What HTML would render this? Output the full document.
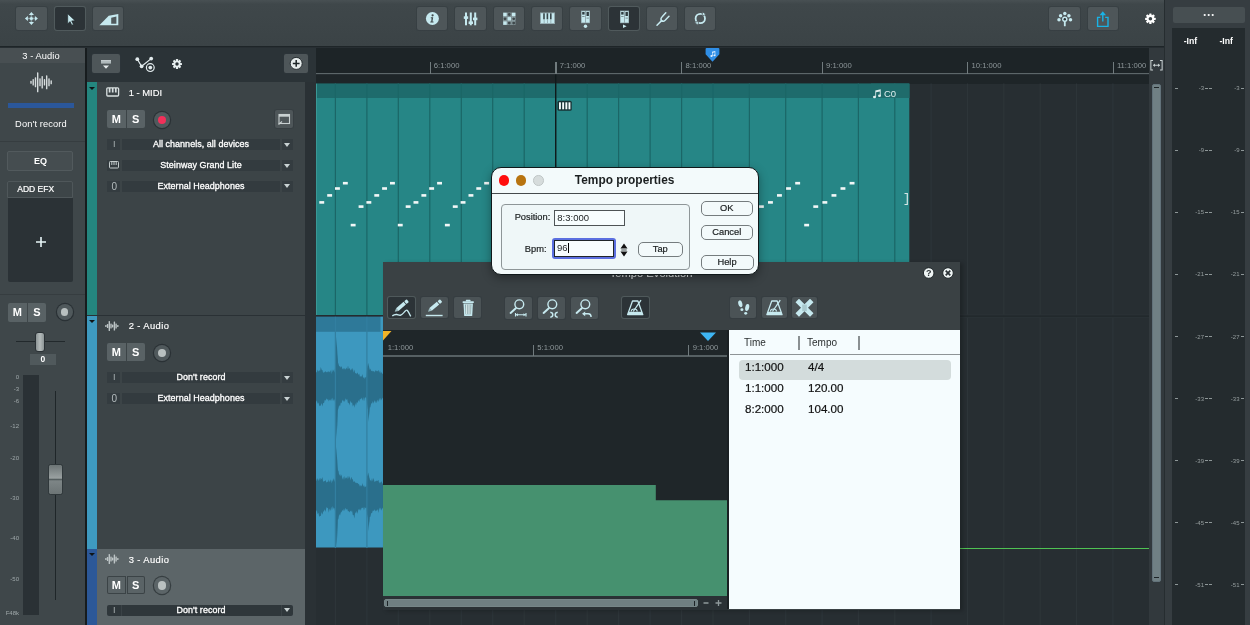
<!DOCTYPE html><html><head><meta charset="utf-8"><title>Tempo properties</title><style>
*{box-sizing:border-box;margin:0;padding:0}
html,body{width:1250px;height:625px;overflow:hidden;background:#272e32;}
body{will-change:transform}
body{position:relative;font-family:"Liberation Sans",sans-serif;color:#fff;font-size:9px;}
.a{position:absolute}
.btn{position:absolute;background:#4e5659;border-radius:2px;box-shadow:0 0 0 1px rgba(48,56,60,.4)}
.btn.on{background:#2c3337;box-shadow:0 0 0 1px rgba(85,95,98,.8)}
.ms{position:absolute;width:18.5px;height:18.5px;background:#596265;color:#fff;font-weight:bold;font-size:11px;line-height:18.5px;text-align:center}
.rec{position:absolute;width:16.500px;height:16.500px;border-radius:50%;background:#50595c;box-shadow:0 0 0 1.200px #2a3135}
.rec i{position:absolute;left:4px;top:4px;width:8.500px;height:8.500px;border-radius:50%;background:#b9c0c0}
.rec.r i{background:#f2305a}
.row{position:absolute;height:11px;left:107px;width:186px;}
.row .c1{position:absolute;left:0;top:0;width:13px;height:11px;background:#343c40;color:#aab2b3;font-size:9px;line-height:11px;text-align:center;padding-left:1.500px}
.row .c2{position:absolute;left:15px;top:0;width:158px;height:11px;background:#333b3f;color:#fff;font-size:8.950px;line-height:11.600px;text-align:center;-webkit-text-stroke:.3px #fff;letter-spacing:.05px}
.row .c3{position:absolute;left:175px;top:0;width:11px;height:11px;background:#343c40}
.row .c3:after{content:"";position:absolute;left:1.700px;top:3.800px;border:3.800px solid transparent;border-top:4px solid #c9d2d3;border-bottom:0}
.tname{position:absolute;left:128.700px;font-size:9.4px;color:#fff;-webkit-text-stroke:.15px #fff;white-space:nowrap;line-height:12px}
.rt{position:absolute;font-size:7.700px;color:#8e979a;white-space:nowrap;line-height:10px}
.tick{position:absolute;width:1.2px;background:#717b7e}
.ml{position:absolute;font-size:6px;color:#969e9f;line-height:6px;white-space:nowrap}
.sl{position:absolute;font-size:6px;color:#9fa8aa;line-height:6px;white-space:nowrap;text-align:right;width:14px;left:5px}
</style></head><body>
<div class="a" style="left:0;top:0;width:1164px;height:47px;background:linear-gradient(#485053 0,#3f474a 9%,#3b4346 100%);border-bottom:1.600px solid #1e2528"></div>
<div class="btn" style="left:16px;top:7px;width:30.5px;height:22.6px"><svg class="a" style="left:0;top:0" width="30.5" height="23" viewBox="0 0 30.5 23"><g fill="#c6e9ef"><circle cx="15.4" cy="11.5" r="1.6"/><path d="M15.4 5l2.6 3h-5.2zM15.4 18l2.6-3h-5.2zM8.9 11.5l3-2.6v5.2zM21.9 11.5l-3-2.6v5.2z"/><rect x="14.6" y="8" width="1.6" height="7" opacity=".5"/><rect x="11.9" y="10.7" width="7" height="1.6" opacity=".5"/></g></svg></div>
<div class="btn on" style="left:54.5px;top:7px;width:30.5px;height:22.6px"><svg class="a" style="left:0;top:0" width="30.5" height="23" viewBox="0 0 30.5 23"><path fill="#c6e9ef" stroke="#1d2427" stroke-width=".6" d="M12.700 6.800v10l2.400-2.200 1.700 3.600 1.600-.8-1.700-3.500 3.400-.2z"/></svg></div>
<div class="btn" style="left:93px;top:7px;width:30.2px;height:22.6px"><svg class="a" style="left:0;top:0" width="30.5" height="23" viewBox="0 0 30.5 23"><path fill="#c6e9ef" d="M6.400 18.300L15.700 8.700l9.600-1.600v11.200z"/><path fill="#50595c" d="M18.200 10.700l5.200-1.100v7.100h-5.200z"/></svg></div>
<div class="btn" style="left:417.0px;top:6.7px;width:30.4px;height:23px"><svg class="a" style="left:0;top:0" width="30.4" height="23" viewBox="0 0 30.4 23"><circle cx="15.4" cy="11.5" r="6.500" fill="#c6e9ef"/><circle cx="15.6" cy="8.3" r="1.1" fill="#3f484b"/><path d="M13.8 10.3h2.4l-.7 4.3h1v1h-3.2v-1h.9l.4-3.3h-.8z" fill="#3f484b"/></svg></div>
<div class="btn" style="left:455.3px;top:6.7px;width:30.4px;height:23px"><svg class="a" style="left:0;top:0" width="30.4" height="23" viewBox="0 0 30.4 23"><g fill="#c6e9ef"><rect x="10" y="5.500" width="2" height="12.800"/><rect x="14.800" y="5.500" width="2" height="12.800"/><rect x="19.200" y="5.500" width="2" height="12.800"/><rect x="8.800" y="9.300" width="4.400" height="2.600"/><rect x="13.600" y="14.400" width="4.400" height="2.600"/><rect x="18" y="10.600" width="4.400" height="2.600"/></g></svg></div>
<div class="btn" style="left:493.6px;top:6.7px;width:30.4px;height:23px"><svg class="a" style="left:0;top:0" width="30.4" height="23" viewBox="0 0 30.4 23"><rect x="9" y="5.5" width="12.5" height="12.5" fill="#7f9094"/><g fill="#c6e9ef"><rect x="9.3" y="5.8" width="3.4" height="3.4"/><rect x="18" y="5.8" width="3.4" height="3.4"/><rect x="13.6" y="10.1" width="3.4" height="3.4"/><rect x="9.3" y="14.4" width="3.4" height="3.4"/><rect x="18" y="10.1" width="3.4" height="3.4" opacity=".3"/></g><g fill="#3f484b"><circle cx="15.3" cy="7.5" r="1.4"/><circle cx="11" cy="11.8" r="1.4"/><circle cx="19.7" cy="11.8" r="1.4"/><circle cx="15.3" cy="16.1" r="1.4"/><circle cx="19.7" cy="16.1" r="1.4"/></g></svg></div>
<div class="btn" style="left:531.9px;top:6.7px;width:30.4px;height:23px"><svg class="a" style="left:0;top:0" width="30.4" height="23" viewBox="0 0 30.4 23"><rect x="8" y="5.5" width="15" height="11.5" fill="#93a9ae"/><rect x="9" y="6.3" width="13" height="9.8" fill="#c6e9ef"/><g fill="#38464a"><rect x="11.2" y="6.3" width="1.6" height="6"/><rect x="14.6" y="6.3" width="1.6" height="6"/><rect x="18" y="6.3" width="1.6" height="6"/></g><g fill="#7d9195"><rect x="11.8" y="12.3" width=".6" height="3.8"/><rect x="15.2" y="12.3" width=".6" height="3.8"/><rect x="18.6" y="12.3" width=".6" height="3.8"/></g></svg></div>
<div class="btn" style="left:570.2px;top:6.7px;width:30.4px;height:23px"><svg class="a" style="left:0;top:0" width="30.4" height="23" viewBox="0 0 30.4 23"><rect x="11" y="3.6" width="9" height="12.6" fill="#8fa4a9"/><rect x="11.7" y="4.3" width="3.4" height="11.2" fill="#c6e9ef"/><rect x="16" y="4.3" width="3.4" height="11.2" fill="#c6e9ef"/><rect x="12.2" y="5" width="2.4" height="2.6" fill="#2f3b3f"/><rect x="16.5" y="5" width="2.4" height="4" fill="#2f3b3f"/><rect x="12.2" y="9" width="2.4" height="1" fill="#7d9195"/><rect x="16.5" y="10.6" width="2.4" height="1" fill="#7d9195"/><circle cx="15.5" cy="19.3" r="1.7" fill="#c6e9ef"/></svg></div>
<div class="btn on" style="left:608.5px;top:6.7px;width:30.4px;height:23px"><svg class="a" style="left:0;top:0" width="30.4" height="23" viewBox="0 0 30.4 23"><rect x="11" y="3.6" width="9" height="12.6" fill="#8fa4a9"/><rect x="11.7" y="4.3" width="3.4" height="11.2" fill="#c6e9ef"/><rect x="16" y="4.3" width="3.4" height="11.2" fill="#c6e9ef"/><rect x="12.2" y="5" width="2.4" height="2.6" fill="#2f3b3f"/><rect x="16.5" y="5" width="2.4" height="4" fill="#2f3b3f"/><rect x="12.2" y="9" width="2.4" height="1" fill="#7d9195"/><rect x="16.5" y="10.6" width="2.4" height="1" fill="#7d9195"/><path d="M14 17.5l3.6 1.8-3.6 1.8z" fill="#c6e9ef"/></svg></div>
<div class="btn" style="left:646.8px;top:6.7px;width:30.4px;height:23px"><svg class="a" style="left:0;top:0" width="30.4" height="23" viewBox="0 0 30.4 23"><g fill="none" stroke="#c6e9ef" stroke-width="1.5" stroke-linecap="round"><path d="M10 18.2l4.6-4.6"/><path d="M14.6 13.6c-1.2-1.2-.6-2.6.6-3.800l3.600-4"/><path d="M14.6 13.6c1.200 1.2 2.600.6 3.800-.6l3.600-3.800"/></g></svg></div>
<div class="btn" style="left:685.0999999999999px;top:6.7px;width:30.4px;height:23px"><svg class="a" style="left:0;top:0" width="30.4" height="23" viewBox="0 0 30.4 23"><circle cx="15.300" cy="11.500" r="4.700" fill="none" stroke="#c6e9ef" stroke-width="1.800"/><path d="M17.500 4.800l3.600 2.600-4 1.600z" fill="#c6e9ef" stroke="#4e5659" stroke-width=".8"/><path d="M13.100 18.200l-3.600-2.600 4-1.600z" fill="#c6e9ef" stroke="#4e5659" stroke-width=".8"/></svg></div>
<div class="btn" style="left:1049.2px;top:6.5px;width:30.6px;height:23.5px"><svg class="a" style="left:0;top:0" width="30.8" height="23.5" viewBox="0 0 30.8 23.5"><g fill="#c6e9ef"><circle cx="15.800" cy="6.600" r="1.750"/><circle cx="11.600" cy="8.700" r="1.750"/><circle cx="19.900" cy="8.700" r="1.750"/><circle cx="10" cy="12.800" r="1.750"/><circle cx="21.500" cy="12.800" r="1.750"/><rect x="14.900" y="14" width="1.800" height="5.300" rx=".6"/><circle cx="15.800" cy="12.300" r="2.700"/></g><circle cx="15.800" cy="12.300" r="1.200" fill="#2c3337"/></svg></div>
<div class="btn" style="left:1088px;top:6.5px;width:30.2px;height:23.5px"><svg class="a" style="left:0;top:0" width="30.2" height="23.5" viewBox="0 0 30.2 23.5"><g fill="none" stroke="#19b3e6" stroke-width="1.400"><path d="M12.400 10.400h-2.800v9h10.400v-9h-2.800"/><path d="M14.800 14.500v-7"/></g><path d="M14.800 4.300l3.200 4h-6.400z" fill="#19b3e6"/></svg></div>
<svg class="a" style="left:1142px;top:10px" width="18" height="18"><g transform="translate(8.4 8.8)"><circle r="3.82" fill="#fff"/><rect x="-1.17" y="-5.30" width="2.33" height="10.60" rx=".5" fill="#fff" transform="rotate(0)"/><rect x="-1.17" y="-5.30" width="2.33" height="10.60" rx=".5" fill="#fff" transform="rotate(45)"/><rect x="-1.17" y="-5.30" width="2.33" height="10.60" rx=".5" fill="#fff" transform="rotate(90)"/><rect x="-1.17" y="-5.30" width="2.33" height="10.60" rx=".5" fill="#fff" transform="rotate(135)"/><circle r="1.80" fill="#3d4548"/></g></svg>
<div class="a" style="left:0;top:48px;width:85px;height:577px;background:#3f474a"></div>
<div class="a" style="left:0;top:48px;width:85px;height:14.5px;background:#484f52"></div>
<div class="a" style="left:85px;top:48px;width:1.700px;height:577px;background:#171c1e"></div>
<div class="a" style="left:0;top:50.800px;width:82px;text-align:center;font-size:9.3px;letter-spacing:.1px;line-height:11px;color:#fff">3 - Audio</div>
<svg class="a" style="left:0;top:0" width="85" height="120"><rect x="30.3" y="80.80" width="1.400" height="3" rx=".6" fill="#d6dcdd"/><rect x="32.5" y="79.05" width="1.400" height="6.5" rx=".6" fill="#d6dcdd"/><rect x="34.8" y="77.30" width="1.400" height="10" rx=".6" fill="#d6dcdd"/><rect x="37.0" y="72.30" width="1.400" height="20" rx=".6" fill="#d6dcdd"/><rect x="39.3" y="78.30" width="1.400" height="8" rx=".6" fill="#d6dcdd"/><rect x="41.5" y="76.05" width="1.400" height="12.5" rx=".6" fill="#d6dcdd"/><rect x="43.8" y="79.05" width="1.400" height="6.5" rx=".6" fill="#d6dcdd"/><rect x="46.0" y="75.30" width="1.400" height="14" rx=".6" fill="#d6dcdd"/><rect x="48.3" y="78.30" width="1.400" height="8" rx=".6" fill="#d6dcdd"/><rect x="50.5" y="80.30" width="1.400" height="4" rx=".6" fill="#d6dcdd"/></svg>
<div class="a" style="left:7.500px;top:102.5px;width:66px;height:5.500px;background:#2b579a"></div>
<div class="a" style="left:0;top:118.600px;width:82px;text-align:center;font-size:9.3px;letter-spacing:.12px;line-height:11px;color:#fff">Don't record</div>
<div class="a" style="left:0;top:141px;width:85px;height:1px;background:#363d40"></div>
<div class="a" style="left:7.300px;top:150.500px;width:66.200px;height:20px;background:#454d50;border:1px solid #525a5d;border-radius:2px;text-align:center;font-weight:bold;font-size:9px;line-height:18px">EQ</div>
<div class="a" style="left:7.300px;top:181px;width:66.200px;height:16.500px;background:#3d4548;border:1px solid #4f575a;border-radius:2px 2px 0 0;font-size:8.500px;line-height:14px;padding-left:9px;-webkit-text-stroke:.2px #fff">ADD EFX</div>
<div class="a" style="left:8px;top:197.500px;width:65px;height:84.500px;background:#2b3236;border-radius:0 0 2px 2px"></div>
<svg class="a" style="left:35px;top:236px" width="12" height="12"><path d="M6 1v10M1 6h10" stroke="#e8f6f8" stroke-width="1.600"/></svg>
<div class="a" style="left:0;top:294px;width:85px;height:1px;background:#363d40"></div>
<div class="ms" style="left:8.200px;top:303px;border-radius:2px 0 0 2px">M</div><div class="ms" style="left:27.700px;top:303px;border-radius:0 2px 2px 0">S</div>
<div class="rec" style="left:56.700px;top:303.900px;width:16px;height:16px"><i style="left:4.200px;top:4.200px;width:7.600px;height:7.600px"></i></div>
<div class="a" style="left:16px;top:340.500px;width:49px;height:1px;background:#22292c"></div>
<div class="a" style="left:35px;top:332px;width:9.500px;height:19.500px;background:linear-gradient(90deg,#8d9596,#b4bbbb,#8d9596);border-radius:3px;border:1px solid #2b3236"></div>
<div class="a" style="left:30px;top:354px;width:25.500px;height:11px;background:#50595c;text-align:center;font-size:8.500px;font-weight:bold;line-height:11px;color:#fff">0</div>
<div class="a" style="left:22.500px;top:375px;width:16.500px;height:240px;background:#2a3135"></div>
<div class="a" style="left:54.500px;top:391px;width:1.600px;height:208.500px;background:#1f2629"></div>
<div class="a" style="left:48px;top:464px;width:15px;height:31px;background:linear-gradient(#6d7576,#9aa1a1 45%,#555e5f 50%,#7d8586 55%,#6d7576);border-radius:2.500px;border:1px solid #30383b"></div>
<div class="sl" style="top:374px">0</div>
<div class="sl" style="top:386px">-3</div>
<div class="sl" style="top:398px">-6</div>
<div class="sl" style="top:422.5px">-12</div>
<div class="sl" style="top:455px">-20</div>
<div class="sl" style="top:495px">-30</div>
<div class="sl" style="top:535px">-40</div>
<div class="sl" style="top:575.5px">-50</div>
<div class="sl" style="top:610px">F48k</div>
<div class="a" style="left:87px;top:48px;width:229px;height:33.800px;background:#2b3337"></div>
<div class="btn" style="left:92px;top:54px;width:28px;height:19px"><svg class="a" style="left:0;top:0" width="28" height="19" viewBox="0 0 28 19"><rect x="9" y="6" width="10" height="3.600" fill="#aeb8ba"/><rect x="9" y="6" width="10" height="1.200" fill="#d5dcdd" opacity=".5"/><path d="M11 11.500h6l-3 3.200z" fill="#e4eaeb"/></svg></div>
<svg class="a" style="left:134px;top:55px" width="24" height="20"><g fill="none" stroke="#e3ecee" stroke-width="1.200"><path d="M3.300 4.200l4.300 7.100 9.600-7.700"/><circle cx="16.300" cy="12.600" r="3.900"/></g><g fill="#e3ecee"><circle cx="3.300" cy="4.200" r="1.900"/><circle cx="7.600" cy="11.300" r="1.900"/><circle cx="17.200" cy="3.600" r="1.900"/><circle cx="16.300" cy="12.600" r="1.900"/></g></svg>
<svg class="a" style="left:170px;top:57px" width="14" height="14"><g transform="translate(7 7)"><circle r="3.60" fill="#e6eeef"/><rect x="-1.10" y="-5.00" width="2.20" height="10.00" rx=".5" fill="#e6eeef" transform="rotate(0)"/><rect x="-1.10" y="-5.00" width="2.20" height="10.00" rx=".5" fill="#e6eeef" transform="rotate(45)"/><rect x="-1.10" y="-5.00" width="2.20" height="10.00" rx=".5" fill="#e6eeef" transform="rotate(90)"/><rect x="-1.10" y="-5.00" width="2.20" height="10.00" rx=".5" fill="#e6eeef" transform="rotate(135)"/><circle r="1.70" fill="#2b3337"/></g></svg>
<div class="btn" style="left:284.4px;top:54.3px;width:23.2px;height:18.8px"><svg class="a" style="left:0;top:0" width="23.5" height="19" viewBox="0 0 23.5 19"><circle cx="12.200" cy="9.400" r="6" fill="#e6ecec" stroke="#1d2427" stroke-width=".9"/><path d="M12.200 6v6.800M8.800 9.400h6.800" stroke="#1d2427" stroke-width="1.500"/></svg></div>
<div class="a" style="left:87px;top:81.8px;width:9.500px;height:233.2px;background:#24867f"></div>
<div class="a" style="left:96.500px;top:81.8px;width:208.500px;height:233.2px;background:#3c4447"></div>
<div class="a" style="left:88.500px;top:87px;border:3px solid transparent;border-top:3.500px solid #0f1416;border-bottom:0"></div>
<svg class="a" style="left:105.800px;top:87.2px" width="14" height="11"><rect x=".8" y=".8" width="11.800" height="8.200" rx="1" fill="none" stroke="#d8dfe0" stroke-width="1.300"/><path d="M3.600 1v4.400M6.700 1v4.400M9.800 1v4.400" stroke="#d8dfe0" stroke-width="1.700"/></svg>
<div class="tname" style="top:87.2px">1 - MIDI</div>
<div class="ms" style="left:107px;top:109.8px;background:#596265;border-radius:2px 0 0 2px">M</div><div class="ms" style="left:126.500px;border-radius:0 2px 2px 0;top:109.8px;background:#596265">S</div>
<div class="rec r" style="left:153.800px;top:111.6px"><i></i></div>
<div class="btn" style="left:275.3px;top:110px;width:18px;height:18px"><svg class="a" style="left:0;top:0" width="18.5" height="18.5" viewBox="0 0 18.5 18.5"><rect x="4" y="4.500" width="10.500" height="9" fill="none" stroke="#c8d0d1" stroke-width="1.100"/><rect x="4" y="4.500" width="10.500" height="2.200" fill="#c8d0d1"/><path d="M3.500 14.500l3.500-3" stroke="#c8d0d1" stroke-width="1.100"/></svg></div>
<div class="row" style="top:139.0px"><div class="c1" style="">I</div><div class="c2" style="">All channels, all devices</div><div class="c3" style=""></div></div>
<div class="row" style="top:159.8px"><div class="c1" style=""><svg class="a" style="left:1.500px;top:1.500px" width="10" height="8"><rect x=".5" y=".5" width="9" height="6.500" rx=".8" fill="none" stroke="#c3cbcc" stroke-width="1"/><path d="M2.800 .8v3.200M5 .8v3.200M7.200 .8v3.200" stroke="#c3cbcc" stroke-width="1"/></svg></div><div class="c2" style="">Steinway Grand Lite</div><div class="c3" style=""></div></div>
<div class="row" style="top:180.6px"><div class="c1" style=""><span style="font-size:10px;color:#b4bcbd">0</span></div><div class="c2" style="">External Headphones</div><div class="c3" style=""></div></div>
<div class="a" style="left:87px;top:314.700px;width:218px;height:1.300px;background:#2a3135"></div>
<div class="a" style="left:87px;top:316px;width:9.500px;height:232.7px;background:#3e9ac0"></div>
<div class="a" style="left:96.500px;top:316px;width:208.500px;height:232.7px;background:#3c4447"></div>
<div class="a" style="left:88.500px;top:320px;border:3px solid transparent;border-top:3.500px solid #0f1416;border-bottom:0"></div>
<svg class="a" style="left:105.300px;top:320.2px" width="15" height="12"><rect x="0.2" y="5.0" width="1.400" height="2" rx=".5" fill="#bcc4c5"/><rect x="1.9" y="4.0" width="1.400" height="4" rx=".5" fill="#bcc4c5"/><rect x="3.6" y="1.0" width="1.400" height="10" rx=".5" fill="#bcc4c5"/><rect x="5.3" y="3.5" width="1.400" height="5" rx=".5" fill="#bcc4c5"/><rect x="7.0" y="4.5" width="1.400" height="3" rx=".5" fill="#bcc4c5"/><rect x="8.7" y="1.5" width="1.400" height="9" rx=".5" fill="#bcc4c5"/><rect x="10.4" y="3.5" width="1.400" height="5" rx=".5" fill="#bcc4c5"/><rect x="12.1" y="5.0" width="1.400" height="2" rx=".5" fill="#bcc4c5"/></svg>
<div class="tname" style="top:320.2px;letter-spacing:.4px">2 - Audio</div>
<div class="ms" style="left:107px;top:342.8px;background:#596265;border-radius:2px 0 0 2px">M</div><div class="ms" style="left:126.500px;border-radius:0 2px 2px 0;top:342.8px;background:#596265">S</div>
<div class="rec" style="left:153.800px;top:344.6px"><i></i></div>
<div class="row" style="top:372.0px"><div class="c1" style="">I</div><div class="c2" style="">Don't record</div><div class="c3" style=""></div></div>
<div class="row" style="top:392.8px"><div class="c1" style=""><span style="font-size:10px;color:#b4bcbd">0</span></div><div class="c2" style="">External Headphones</div><div class="c3" style=""></div></div>
<div class="a" style="left:87px;top:548.7px;width:9.500px;height:76.3px;background:#2c5898"></div>
<div class="a" style="left:96.500px;top:548.7px;width:208.500px;height:76.3px;background:#5c6568"></div>
<div class="a" style="left:88.500px;top:552.7px;border:3px solid transparent;border-top:3.500px solid #0f1416;border-bottom:0"></div>
<svg class="a" style="left:105.300px;top:552.9000000000001px" width="15" height="12"><rect x="0.2" y="5.0" width="1.400" height="2" rx=".5" fill="#bcc4c5"/><rect x="1.9" y="4.0" width="1.400" height="4" rx=".5" fill="#bcc4c5"/><rect x="3.6" y="1.0" width="1.400" height="10" rx=".5" fill="#bcc4c5"/><rect x="5.3" y="3.5" width="1.400" height="5" rx=".5" fill="#bcc4c5"/><rect x="7.0" y="4.5" width="1.400" height="3" rx=".5" fill="#bcc4c5"/><rect x="8.7" y="1.5" width="1.400" height="9" rx=".5" fill="#bcc4c5"/><rect x="10.4" y="3.5" width="1.400" height="5" rx=".5" fill="#bcc4c5"/><rect x="12.1" y="5.0" width="1.400" height="2" rx=".5" fill="#bcc4c5"/></svg>
<div class="tname" style="top:553.7px;letter-spacing:.4px">3 - Audio</div>
<div class="ms" style="left:107px;top:575.5px;background:#5a6366;box-shadow:inset 0 0 0 1px #3b4346;border-radius:2px 0 0 2px">M</div><div class="ms" style="left:126.500px;border-radius:0 2px 2px 0;top:575.5px;background:#5a6366;box-shadow:inset 0 0 0 1px #3b4346">S</div>
<div class="rec" style="left:153.800px;top:577.3000000000001px;background:#5c6568;box-shadow:0 0 0 1.200px #363e41"><i></i></div>
<div class="a" style="left:107px;top:604.7px;width:186px;height:11px;background:#2f373b;border-radius:2px"></div><div class="a" style="left:120.500px;top:604.7px;width:1px;height:11px;background:#3a4246"></div><div class="a" style="left:280.500px;top:604.7px;width:1px;height:11px;background:#3a4246"></div>
<div class="row" style="top:604.7px"><div class="c1" style="background:transparent">I</div><div class="c2" style="background:transparent">Don't record</div><div class="c3" style="background:transparent"></div></div>
<div class="a" style="left:305px;top:81.800px;width:11px;height:543.200px;background:#2a3135"></div>
<div class="a" style="left:316px;top:48px;width:833px;height:26px;background:#1d2427"></div>
<div class="a" style="left:316px;top:73.200px;width:833px;height:1.300px;background:#5c6669"></div>
<div class="a" style="left:316px;top:74.500px;width:833px;height:9px;background:#1e2528"></div>
<div class="tick" style="left:429.5px;top:62px;height:12px"></div>
<div class="rt" style="left:433.8px;top:61.200px">6:1:000</div>
<div class="tick" style="left:555.4px;top:62px;height:12px"></div>
<div class="rt" style="left:559.7px;top:61.200px">7:1:000</div>
<div class="tick" style="left:681.3px;top:62px;height:12px"></div>
<div class="rt" style="left:685.6px;top:61.200px">8:1:000</div>
<div class="tick" style="left:821.8px;top:62px;height:12px"></div>
<div class="rt" style="left:826.1px;top:61.200px">9:1:000</div>
<div class="tick" style="left:967.2px;top:62px;height:12px"></div>
<div class="rt" style="left:971.5px;top:61.200px">10:1:000</div>
<div class="tick" style="left:1112.6px;top:62px;height:12px"></div>
<div class="rt" style="left:1116.9px;top:61.200px">11:1:000</div>
<svg class="a" style="left:0;top:0" width="1250" height="625"><rect x="334.8" y="83.500" width="1.200" height="541.500" fill="#2d3539"/><rect x="366.3" y="83.500" width="1.200" height="541.500" fill="#2d3539"/><rect x="397.7" y="83.500" width="1.200" height="541.500" fill="#2d3539"/><rect x="429.2" y="83.500" width="1.200" height="541.500" fill="#2d3539"/><rect x="460.7" y="83.500" width="1.200" height="541.500" fill="#2d3539"/><rect x="492.1" y="83.500" width="1.200" height="541.500" fill="#2d3539"/><rect x="523.6" y="83.500" width="1.200" height="541.500" fill="#2d3539"/><rect x="555.1" y="83.500" width="1.200" height="541.500" fill="#2d3539"/><rect x="586.6" y="83.500" width="1.200" height="541.500" fill="#2d3539"/><rect x="618.0" y="83.500" width="1.200" height="541.500" fill="#2d3539"/><rect x="649.5" y="83.500" width="1.200" height="541.500" fill="#2d3539"/><rect x="681.0" y="83.500" width="1.200" height="541.500" fill="#2d3539"/><rect x="712.4" y="83.500" width="1.200" height="541.500" fill="#2d3539"/><rect x="748.8" y="83.500" width="1.200" height="541.500" fill="#2d3539"/><rect x="785.1" y="83.500" width="1.200" height="541.500" fill="#2d3539"/><rect x="821.5" y="83.500" width="1.200" height="541.500" fill="#2d3539"/><rect x="857.8" y="83.500" width="1.200" height="541.500" fill="#2d3539"/><rect x="894.2" y="83.500" width="1.200" height="541.500" fill="#2d3539"/><rect x="930.5" y="83.500" width="1.200" height="541.500" fill="#2d3539"/><rect x="966.9" y="83.500" width="1.200" height="541.500" fill="#2d3539"/><rect x="1003.2" y="83.500" width="1.200" height="541.500" fill="#2d3539"/><rect x="1039.6" y="83.500" width="1.200" height="541.500" fill="#2d3539"/><rect x="1075.9" y="83.500" width="1.200" height="541.500" fill="#2d3539"/><rect x="1112.3" y="83.500" width="1.200" height="541.500" fill="#2d3539"/><rect x="316" y="314.300" width="833" height="3.600" fill="#2b3236"/><rect x="316" y="315.400" width="833" height="1.400" fill="#21282b"/></svg>
<svg class="a" style="left:0;top:0" width="1250" height="625"><rect x="316" y="83.700" width="593.300" height="231.300" fill="#268686"/><rect x="316" y="83.700" width="593.300" height="14.300" fill="#1e6b6c"/><rect x="316" y="83.700" width="1" height="231.300" fill="#3a9896"/><rect x="334.8" y="83.500" width="1.200" height="231.500" fill="#1b6667"/><rect x="366.3" y="83.500" width="1.200" height="231.500" fill="#1b6667"/><rect x="397.7" y="83.500" width="1.200" height="231.500" fill="#1b6667"/><rect x="429.2" y="83.500" width="1.200" height="231.500" fill="#1b6667"/><rect x="460.7" y="83.500" width="1.200" height="231.500" fill="#1b6667"/><rect x="492.1" y="83.500" width="1.200" height="231.500" fill="#1b6667"/><rect x="523.6" y="83.500" width="1.200" height="231.500" fill="#1b6667"/><rect x="555.1" y="83.500" width="1.200" height="231.500" fill="#1b6667"/><rect x="586.6" y="83.500" width="1.200" height="231.500" fill="#1b6667"/><rect x="618.0" y="83.500" width="1.200" height="231.500" fill="#1b6667"/><rect x="649.5" y="83.500" width="1.200" height="231.500" fill="#1b6667"/><rect x="681.0" y="83.500" width="1.200" height="231.500" fill="#1b6667"/><rect x="712.4" y="83.500" width="1.200" height="231.500" fill="#1b6667"/><rect x="748.8" y="83.500" width="1.200" height="231.500" fill="#1b6667"/><rect x="785.1" y="83.500" width="1.200" height="231.500" fill="#1b6667"/><rect x="821.5" y="83.500" width="1.200" height="231.500" fill="#1b6667"/><rect x="857.8" y="83.500" width="1.200" height="231.500" fill="#1b6667"/><rect x="894.2" y="83.500" width="1.200" height="231.500" fill="#1b6667"/><rect x="555.0" y="74.500" width="1.400" height="240.500" fill="#10191b"/><rect x="319.3" y="201.1" width="4.900" height="2.600" fill="#f2f7f7"/><rect x="327.2" y="194.1" width="4.900" height="2.600" fill="#f2f7f7"/><rect x="335.0" y="187.2" width="4.900" height="2.600" fill="#f2f7f7"/><rect x="342.9" y="181.9" width="4.900" height="2.600" fill="#f2f7f7"/><rect x="350.7" y="223.8" width="4.900" height="2.600" fill="#f2f7f7"/><rect x="358.6" y="205.3" width="4.900" height="2.600" fill="#f2f7f7"/><rect x="366.4" y="201.1" width="4.900" height="2.600" fill="#f2f7f7"/><rect x="374.3" y="194.1" width="4.900" height="2.600" fill="#f2f7f7"/><rect x="382.1" y="187.2" width="4.900" height="2.600" fill="#f2f7f7"/><rect x="390.0" y="181.9" width="4.900" height="2.600" fill="#f2f7f7"/><rect x="397.8" y="223.8" width="4.900" height="2.600" fill="#f2f7f7"/><rect x="405.7" y="205.3" width="4.900" height="2.600" fill="#f2f7f7"/><rect x="413.5" y="201.1" width="4.900" height="2.600" fill="#f2f7f7"/><rect x="421.4" y="194.1" width="4.900" height="2.600" fill="#f2f7f7"/><rect x="429.2" y="187.2" width="4.900" height="2.600" fill="#f2f7f7"/><rect x="437.1" y="181.9" width="4.900" height="2.600" fill="#f2f7f7"/><rect x="444.9" y="223.8" width="4.900" height="2.600" fill="#f2f7f7"/><rect x="452.8" y="205.3" width="4.900" height="2.600" fill="#f2f7f7"/><rect x="460.6" y="201.1" width="4.900" height="2.600" fill="#f2f7f7"/><rect x="468.5" y="194.1" width="4.900" height="2.600" fill="#f2f7f7"/><rect x="476.3" y="187.2" width="4.900" height="2.600" fill="#f2f7f7"/><rect x="484.2" y="181.9" width="4.900" height="2.600" fill="#f2f7f7"/><rect x="849.6" y="181.9" width="4.900" height="2.600" fill="#f2f7f7"/><rect x="840.5" y="187.2" width="4.900" height="2.600" fill="#f2f7f7"/><rect x="831.5" y="194.1" width="4.900" height="2.600" fill="#f2f7f7"/><rect x="822.4" y="201.1" width="4.900" height="2.600" fill="#f2f7f7"/><rect x="813.3" y="205.3" width="4.900" height="2.600" fill="#f2f7f7"/><rect x="804.2" y="223.8" width="4.900" height="2.600" fill="#f2f7f7"/><rect x="795.2" y="181.9" width="4.900" height="2.600" fill="#f2f7f7"/><rect x="786.1" y="187.2" width="4.900" height="2.600" fill="#f2f7f7"/><rect x="777.0" y="194.1" width="4.900" height="2.600" fill="#f2f7f7"/><rect x="768.0" y="201.1" width="4.900" height="2.600" fill="#f2f7f7"/><rect x="758.9" y="205.3" width="4.900" height="2.600" fill="#f2f7f7"/><path d="M904.500 193.500h2.800v11h-2.800" fill="none" stroke="#d5e6e6" stroke-width="1.200"/><rect x="557.500" y="100.800" width="14.200" height="9.900" rx="1.500" fill="#173234"/><g fill="#f4fafa"><rect x="559" y="102.300" width="1.900" height="7"/><rect x="562.200" y="102.300" width="1.900" height="7"/><rect x="565.400" y="102.300" width="1.900" height="7"/><rect x="568.500" y="102.300" width="1.900" height="7"/></g><rect x="871" y="83.500" width="38.300" height="14.500" fill="#1f6b6b"/><g fill="#dfeeee"><ellipse cx="874.500" cy="97" rx="1.500" ry="1.200"/><ellipse cx="879.500" cy="95.800" rx="1.500" ry="1.200"/><path d="M875.300 97v-6.500l5.400-1.300v6.600h-.9v-4.400l-3.700.9v4.700z"/></g><text x="884" y="97.300" font-family="Liberation Sans,sans-serif" font-size="9.500" fill="#dfeeee">C0</text></svg>
<svg class="a" style="left:0;top:0" width="1250" height="625"><rect x="316" y="316.800" width="68" height="230.700" fill="#3d98bf"/><rect x="316" y="316.800" width="68" height="15" fill="#2e7999"/><polygon fill="#2a6f8c" points="316.0,371.6 316.8,372.7 317.6,369.6 318.4,371.8 319.2,370.1 320.0,371.3 320.8,367.1 321.6,369.7 322.4,369.9 323.2,373.3 324.0,371.4 324.8,372.5 325.6,370.9 326.4,372.4 327.2,371.4 328.0,372.6 328.8,370.9 329.6,372.4 330.4,369.9 331.2,373.9 332.0,369.3 332.8,372.3 333.6,369.4 334.4,372.7 335.2,366.6 336.0,354.8 336.8,354.6 337.6,361.9 338.4,363.7 339.2,366.5 340.0,365.9 340.8,367.8 341.6,366.0 342.4,369.6 343.2,368.1 344.0,369.7 344.8,368.1 345.6,369.8 346.4,367.4 347.2,369.6 348.0,365.5 348.8,369.3 349.6,367.7 350.4,370.7 351.2,368.5 352.0,370.4 352.8,367.7 353.6,372.7 354.4,369.6 355.2,373.4 356.0,372.8 356.8,374.3 357.6,372.2 358.4,374.9 359.2,373.5 360.0,376.9 360.8,376.1 361.6,376.7 362.4,373.9 363.2,378.3 364.0,376.7 364.8,378.9 365.6,376.9 366.4,376.8 367.2,368.6 368.0,366.0 368.8,367.8 369.6,370.5 370.4,368.6 371.2,371.2 372.0,370.4 372.8,371.5 373.6,371.0 374.4,372.5 375.2,370.0 376.0,371.5 376.8,370.6 377.6,371.6 378.4,369.8 379.2,372.8 380.0,370.4 380.8,373.5 381.6,372.1 382.4,374.1 383.2,373.6 384.0,375.5 384.0,396.7 383.2,399.2 382.4,397.5 381.6,400.6 380.8,397.8 380.0,400.8 379.2,398.1 378.4,401.9 377.6,399.5 376.8,403.3 376.0,400.5 375.2,402.9 374.4,400.0 373.6,403.8 372.8,401.0 372.0,403.8 371.2,403.0 370.4,407.2 369.6,407.5 368.8,417.7 368.0,409.5 367.2,404.5 366.4,398.4 365.6,397.3 364.8,397.8 364.0,401.4 363.2,397.1 362.4,400.8 361.6,397.4 360.8,399.6 360.0,398.6 359.2,402.0 358.4,400.1 357.6,403.0 356.8,401.9 356.0,405.8 355.2,402.9 354.4,407.8 353.6,404.6 352.8,406.4 352.0,402.0 351.2,403.3 350.4,400.4 349.6,405.4 348.8,402.4 348.0,403.5 347.2,399.1 346.4,400.1 345.6,398.3 344.8,402.0 344.0,400.0 343.2,401.7 342.4,399.6 341.6,403.3 340.8,402.4 340.0,406.5 339.2,405.1 338.4,408.6 337.6,410.8 336.8,435.9 336.0,407.6 335.2,402.9 334.4,399.0 333.6,401.1 332.8,397.6 332.0,401.3 331.2,398.3 330.4,400.8 329.6,399.4 328.8,401.4 328.0,398.7 327.2,399.9 326.4,398.3 325.6,400.8 324.8,399.7 324.0,403.3 323.2,402.7 322.4,406.6 321.6,402.9 320.8,405.3 320.0,406.2 319.2,405.4 318.4,402.6 317.6,403.7 316.8,400.2 316.0,401.9"/><polygon fill="#2a6f8c" points="335.6,365.7 336.3,337 338.1,363.2 337.6,411.7 336.7,439 335.8,405.5"/><polygon fill="#2a6f8c" points="367.5,365.9 368.2,363 370.0,371.0 369.5,408.2 368.59999999999997,422 367.7,404.6"/><polygon fill="#2a6f8c" points="316.0,478.4 316.8,481.2 317.6,478.0 318.4,481.3 319.2,478.0 320.0,480.4 320.8,477.7 321.6,479.6 322.4,477.1 323.2,482.1 324.0,480.9 324.8,481.3 325.6,479.9 326.4,482.7 327.2,481.6 328.0,482.2 328.8,479.5 329.6,482.5 330.4,479.2 331.2,483.5 332.0,479.6 332.8,482.1 333.6,478.1 334.4,481.9 335.2,477.2 336.0,464.6 336.8,465.4 337.6,471.2 338.4,470.4 339.2,475.7 340.0,473.7 340.8,476.6 341.6,474.5 342.4,479.7 343.2,476.4 344.0,479.9 344.8,476.1 345.6,478.8 346.4,477.2 347.2,479.1 348.0,475.5 348.8,478.7 349.6,475.9 350.4,480.4 351.2,476.8 352.0,478.8 352.8,479.4 353.6,482.2 354.4,481.0 355.2,482.7 356.0,482.4 356.8,483.2 357.6,483.0 358.4,483.9 359.2,484.6 360.0,486.7 360.8,485.1 361.6,486.5 362.4,483.0 363.2,486.7 364.0,485.0 364.8,487.6 365.6,486.4 366.4,486.3 367.2,475.6 368.0,476.3 368.8,476.3 369.6,480.7 370.4,480.1 371.2,481.5 372.0,478.1 372.8,481.2 373.6,477.7 374.4,482.1 375.2,481.3 376.0,481.2 376.8,480.5 377.6,481.0 378.4,479.8 379.2,483.4 380.0,481.8 380.8,483.1 381.6,480.9 382.4,484.2 383.2,481.9 384.0,483.5 384.0,507.4 383.2,509.5 382.4,507.5 381.6,510.8 380.8,507.4 380.0,510.0 379.2,507.5 378.4,512.9 377.6,509.1 376.8,510.9 376.0,509.9 375.2,511.5 374.4,509.2 373.6,511.1 372.8,510.6 372.0,513.3 371.2,513.0 370.4,516.7 369.6,516.9 368.8,526.1 368.0,518.0 367.2,514.4 366.4,507.2 365.6,508.3 364.8,506.9 364.0,510.5 363.2,507.3 362.4,508.1 361.6,507.7 360.8,510.7 360.0,508.6 359.2,510.2 358.4,509.0 357.6,514.1 356.8,510.7 356.0,513.6 355.2,512.0 354.4,518.5 353.6,514.9 352.8,514.9 352.0,510.2 351.2,511.9 350.4,510.5 349.6,512.4 348.8,511.1 348.0,511.4 347.2,508.7 346.4,509.7 345.6,507.8 344.8,510.9 344.0,508.4 343.2,511.0 342.4,509.9 341.6,511.9 340.8,512.4 340.0,515.8 339.2,513.9 338.4,518.9 337.6,519.8 336.8,545.3 336.0,516.6 335.2,511.9 334.4,508.1 333.6,508.8 332.8,506.1 332.0,510.5 331.2,506.7 330.4,511.1 329.6,508.6 328.8,512.7 328.0,508.3 327.2,507.8 326.4,507.3 325.6,511.9 324.8,509.3 324.0,511.1 323.2,511.8 322.4,514.8 321.6,511.9 320.8,516.1 320.0,516.1 319.2,516.8 318.4,512.8 317.6,514.2 316.8,510.0 316.0,511.7"/><polygon fill="#2a6f8c" points="335.6,475.2 336.3,446.5 338.1,472.7 337.6,521.2 336.7,548.5 335.8,515.0"/><polygon fill="#2a6f8c" points="367.5,475.4 368.2,472.5 370.0,480.5 369.5,517.7 368.59999999999997,531.5 367.7,514.1"/><rect x="380.500" y="316.800" width="3.500" height="15" fill="#3d98bf"/><rect x="334.8" y="316.800" width="1.200" height="231.200" fill="#327fa0"/><rect x="366.3" y="316.800" width="1.200" height="231.200" fill="#327fa0"/></svg>
<div class="a" style="left:960px;top:547.700px;width:190px;height:1.500px;background:#4fc253"></div>
<div class="a" style="left:1149px;top:48px;width:14.700px;height:577px;background:#32393d"></div>
<svg class="a" style="left:1150px;top:58.500px" width="13" height="12.500" viewBox="0 0 15 14"><g fill="none" stroke="#c7d0d1" stroke-width="1.200"><path d="M3.500 1.500h-2.500v11h2.500M11.500 1.500h2.500v11h-2.500M4 7h7"/></g><path d="M3.300 7l2.500-2v4zM11.700 7l-2.500-2v4z" fill="#c7d0d1"/></svg>
<div class="a" style="left:1151.900px;top:83.500px;width:9px;height:498px;background:#708084;border-radius:2px;border:1px solid #62727a"></div>
<div class="a" style="left:1154px;top:86.500px;width:5px;height:1.500px;background:#1d2427"></div>
<div class="a" style="left:1154px;top:576.500px;width:5px;height:1.500px;background:#1d2427"></div>
<div class="a" style="left:1163.700px;top:0;width:1.600px;height:625px;background:#262d30"></div>
<div class="a" style="left:1165.300px;top:0;width:84.700px;height:625px;background:#363d41"></div>
<div class="a" style="left:1172.500px;top:6.500px;width:72px;height:16.500px;background:#474f52;border-radius:2px"></div>
<svg class="a" style="left:1200px;top:12px" width="20" height="6"><g fill="#fff"><circle cx="4.700" cy="3" r="1.100"/><circle cx="8.700" cy="3" r="1.100"/><circle cx="12.700" cy="3" r="1.100"/></g></svg>
<div class="a" style="left:1172px;top:27.500px;width:72.500px;height:597.500px;background:#242b2e"></div>
<div class="a" style="left:1175.4px;top:35.500px;width:30px;text-align:center;font-weight:bold;font-size:8.700px;line-height:11px;color:#fff">-Inf</div>
<div class="a" style="left:1211.2px;top:35.500px;width:30px;text-align:center;font-weight:bold;font-size:8.700px;line-height:11px;color:#fff">-Inf</div>
<div class="a" style="left:1174.500px;top:87.8px;width:3px;height:1px;background:#8d9697"></div>
<div class="ml" style="left:1191px;width:13px;text-align:right;top:85.3px">-3</div>
<div class="a" style="left:1205.200px;top:87.8px;width:2.600px;height:1px;background:#8d9697"></div>
<div class="a" style="left:1209.200px;top:87.8px;width:2.600px;height:1px;background:#8d9697"></div>
<div class="ml" style="left:1226.500px;width:13px;text-align:right;top:85.3px">-3</div>
<div class="a" style="left:1241px;top:87.8px;width:2.600px;height:1px;background:#8d9697"></div>
<div class="a" style="left:1174.500px;top:149.8px;width:3px;height:1px;background:#8d9697"></div>
<div class="ml" style="left:1191px;width:13px;text-align:right;top:147.3px">-9</div>
<div class="a" style="left:1205.200px;top:149.8px;width:2.600px;height:1px;background:#8d9697"></div>
<div class="a" style="left:1209.200px;top:149.8px;width:2.600px;height:1px;background:#8d9697"></div>
<div class="ml" style="left:1226.500px;width:13px;text-align:right;top:147.3px">-9</div>
<div class="a" style="left:1241px;top:149.8px;width:2.600px;height:1px;background:#8d9697"></div>
<div class="a" style="left:1174.500px;top:211.9px;width:3px;height:1px;background:#8d9697"></div>
<div class="ml" style="left:1191px;width:13px;text-align:right;top:209.4px">-15</div>
<div class="a" style="left:1205.200px;top:211.9px;width:2.600px;height:1px;background:#8d9697"></div>
<div class="a" style="left:1209.200px;top:211.9px;width:2.600px;height:1px;background:#8d9697"></div>
<div class="ml" style="left:1226.500px;width:13px;text-align:right;top:209.4px">-15</div>
<div class="a" style="left:1241px;top:211.9px;width:2.600px;height:1px;background:#8d9697"></div>
<div class="a" style="left:1174.500px;top:273.9px;width:3px;height:1px;background:#8d9697"></div>
<div class="ml" style="left:1191px;width:13px;text-align:right;top:271.4px">-21</div>
<div class="a" style="left:1205.200px;top:273.9px;width:2.600px;height:1px;background:#8d9697"></div>
<div class="a" style="left:1209.200px;top:273.9px;width:2.600px;height:1px;background:#8d9697"></div>
<div class="ml" style="left:1226.500px;width:13px;text-align:right;top:271.4px">-21</div>
<div class="a" style="left:1241px;top:273.9px;width:2.600px;height:1px;background:#8d9697"></div>
<div class="a" style="left:1174.500px;top:336.0px;width:3px;height:1px;background:#8d9697"></div>
<div class="ml" style="left:1191px;width:13px;text-align:right;top:333.5px">-27</div>
<div class="a" style="left:1205.200px;top:336.0px;width:2.600px;height:1px;background:#8d9697"></div>
<div class="a" style="left:1209.200px;top:336.0px;width:2.600px;height:1px;background:#8d9697"></div>
<div class="ml" style="left:1226.500px;width:13px;text-align:right;top:333.5px">-27</div>
<div class="a" style="left:1241px;top:336.0px;width:2.600px;height:1px;background:#8d9697"></div>
<div class="a" style="left:1174.500px;top:398.1px;width:3px;height:1px;background:#8d9697"></div>
<div class="ml" style="left:1191px;width:13px;text-align:right;top:395.6px">-33</div>
<div class="a" style="left:1205.200px;top:398.1px;width:2.600px;height:1px;background:#8d9697"></div>
<div class="a" style="left:1209.200px;top:398.1px;width:2.600px;height:1px;background:#8d9697"></div>
<div class="ml" style="left:1226.500px;width:13px;text-align:right;top:395.6px">-33</div>
<div class="a" style="left:1241px;top:398.1px;width:2.600px;height:1px;background:#8d9697"></div>
<div class="a" style="left:1174.500px;top:460.1px;width:3px;height:1px;background:#8d9697"></div>
<div class="ml" style="left:1191px;width:13px;text-align:right;top:457.6px">-39</div>
<div class="a" style="left:1205.200px;top:460.1px;width:2.600px;height:1px;background:#8d9697"></div>
<div class="a" style="left:1209.200px;top:460.1px;width:2.600px;height:1px;background:#8d9697"></div>
<div class="ml" style="left:1226.500px;width:13px;text-align:right;top:457.6px">-39</div>
<div class="a" style="left:1241px;top:460.1px;width:2.600px;height:1px;background:#8d9697"></div>
<div class="a" style="left:1174.500px;top:522.1px;width:3px;height:1px;background:#8d9697"></div>
<div class="ml" style="left:1191px;width:13px;text-align:right;top:519.6px">-45</div>
<div class="a" style="left:1205.200px;top:522.1px;width:2.600px;height:1px;background:#8d9697"></div>
<div class="a" style="left:1209.200px;top:522.1px;width:2.600px;height:1px;background:#8d9697"></div>
<div class="ml" style="left:1226.500px;width:13px;text-align:right;top:519.6px">-45</div>
<div class="a" style="left:1241px;top:522.1px;width:2.600px;height:1px;background:#8d9697"></div>
<div class="a" style="left:1174.500px;top:584.2px;width:3px;height:1px;background:#8d9697"></div>
<div class="ml" style="left:1191px;width:13px;text-align:right;top:581.7px">-51</div>
<div class="a" style="left:1205.200px;top:584.2px;width:2.600px;height:1px;background:#8d9697"></div>
<div class="a" style="left:1209.200px;top:584.2px;width:2.600px;height:1px;background:#8d9697"></div>
<div class="ml" style="left:1226.500px;width:13px;text-align:right;top:581.7px">-51</div>
<div class="a" style="left:1241px;top:584.2px;width:2.600px;height:1px;background:#8d9697"></div>
<svg class="a" style="left:705px;top:47.500px" width="16" height="16"><path d="M1.600 0h11.800q1 0 1 1v5.300l-6.900 7.400-6.900-7.400v-5.300q0-1 1-1z" fill="#2f8ee6"/><g fill="#e8f3ff"><ellipse cx="6.500" cy="8" rx="1.100" ry=".9"/><ellipse cx="9.500" cy="7.300" rx="1.100" ry=".9"/><path d="M7 8v-4.200l3.300-.8v4.300h-.6v-3l-2.100.5v3.200z"/></g></svg><div class="a" style="left:383px;top:262px;width:577px;height:347.500px;background:#3a4144;box-shadow:3px 1px 4px rgba(0,0,0,.22)"></div>
<div class="a" style="left:551px;top:266px;width:200px;text-align:center;font-size:11.200px;line-height:15px;color:#e6ecec">Tempo Evolution</div>
<svg class="a" style="left:922px;top:266px" width="34" height="14"><circle cx="6.700" cy="7" r="5.300" fill="#eef4f4" stroke="#20272a" stroke-width="1"/><circle cx="26" cy="7" r="5.300" fill="#eef4f4" stroke="#20272a" stroke-width="1"/><path d="M23.700 4.700l4.600 4.600M28.300 4.700l-4.600 4.600" stroke="#2b3236" stroke-width="1.700"/><text x="6.700" y="10.300" text-anchor="middle" font-family="Liberation Sans,sans-serif" font-weight="bold" font-size="9" fill="#2b3236">?</text></svg>
<div class="btn on" style="left:388.2px;top:297px;width:27.3px;height:21.3px;"><svg class="a" style="left:0;top:0" width="27.5" height="21.5" viewBox="0 0 27.5 21.5"><g transform="translate(6.7 14.8) rotate(-40.5)"><path d="M0 0l3.400-1.800v3.600z" fill="#9fc0c5"/><rect x="3.400" y="-1.800" width="9.800" height="3.600" fill="#c6e9ef"/><rect x="14" y="-1.800" width="3.200" height="3.600" rx=".8" fill="#c6e9ef"/></g><path d="M4.300 18.900C6 17.600 7.500 17.300 8.800 17.500S11 18.400 12.400 18.200S15.500 16 16.800 14.500S18.300 12.800 19.200 13.300S21.500 17 22.700 19.400" fill="none" stroke="#c6e9ef" stroke-width="1.400"/></svg></div>
<div class="btn" style="left:421.2px;top:297px;width:27px;height:21.3px;background:#4b5356;box-shadow:0 0 0 1px rgba(50,58,61,.5)"><svg class="a" style="left:0;top:0" width="27" height="21.5" viewBox="0 0 27 21.5"><g transform="translate(7 14.7) rotate(-40.5)"><path d="M0 0l3.400-1.800v3.600z" fill="#9fc0c5"/><rect x="3.400" y="-1.800" width="9.800" height="3.600" fill="#c6e9ef"/><rect x="14" y="-1.800" width="3.200" height="3.600" rx=".8" fill="#c6e9ef"/></g><rect x="4.800" y="17.800" width="16.800" height="1.400" fill="#c6e9ef"/></svg></div>
<div class="btn" style="left:454.3px;top:297px;width:26.7px;height:21.3px;background:#4b5356;box-shadow:0 0 0 1px rgba(50,58,61,.5)"><svg class="a" style="left:0;top:0" width="27" height="21.5" viewBox="0 0 27 21.5"><g fill="#c6e9ef"><rect x="8.600" y="4.200" width="11.200" height="1.800" rx=".5"/><rect x="11.800" y="2.800" width="4.800" height="1.600" rx=".6"/><path d="M9.500 6.600h9.400l-.7 12.400h-8z"/></g><path d="M11 7.500h6.400l-.5 9.700h-5.400z" fill="#8ba5a9"/><g stroke="#e8f6f8" stroke-width=".8"><path d="M12.500 7.500v9.500M14.200 7.500v9.500M15.900 7.500v9.500"/></g></svg></div>
<div class="btn" style="left:505px;top:297px;width:27px;height:21.5px;background:#4b5356;box-shadow:0 0 0 1px rgba(50,58,61,.5)"><svg class="a" style="left:0;top:0" width="27" height="21.5" viewBox="0 0 27 21.5"><circle cx="14.300" cy="7.300" r="4.400" fill="none" stroke="#c6e9ef" stroke-width="1.400"/><path d="M10.800 11.300l-5.200 4.600" stroke="#c6e9ef" stroke-width="2" stroke-linecap="round"/><path d="M10.500 16v3.600M21 16v3.600M11 17.800h10" stroke="#c6e9ef" stroke-width="1.100" fill="none"/><path d="M11 17.800l2-1.500v3zM20.500 17.800l-2-1.500v3z" fill="#c6e9ef"/></svg></div>
<div class="btn" style="left:538px;top:297px;width:27px;height:21.5px;background:#4b5356;box-shadow:0 0 0 1px rgba(50,58,61,.5)"><svg class="a" style="left:0;top:0" width="27" height="21.5" viewBox="0 0 27 21.5"><circle cx="14.300" cy="7.300" r="4.400" fill="none" stroke="#c6e9ef" stroke-width="1.400"/><path d="M10.800 11.300l-5.200 4.600" stroke="#c6e9ef" stroke-width="2" stroke-linecap="round"/><path d="M12.300 15.200c2 .3 2.500 1.200 2.500 2.500s-.5 2.200-2.500 2.500M19.700 15.200c-2 .3-2.500 1.200-2.500 2.500s.5 2.200 2.500 2.500" stroke="#c6e9ef" stroke-width="1.500" fill="none"/></svg></div>
<div class="btn" style="left:571px;top:297px;width:27px;height:21.5px;background:#4b5356;box-shadow:0 0 0 1px rgba(50,58,61,.5)"><svg class="a" style="left:0;top:0" width="27" height="21.5" viewBox="0 0 27 21.5"><circle cx="14.300" cy="7.300" r="4.400" fill="none" stroke="#c6e9ef" stroke-width="1.400"/><path d="M10.800 11.300l-5.200 4.600" stroke="#c6e9ef" stroke-width="2" stroke-linecap="round"/><path d="M13.500 16.800h3.800c2 0 2.800 1.500 2.800 3.200" stroke="#c6e9ef" stroke-width="1.400" fill="none"/><path d="M11 16.800l3.200-2.400v4.800z" fill="#c6e9ef"/></svg></div>
<div class="btn on" style="left:621.6px;top:297px;width:27px;height:21.3px;"><svg class="a" style="left:0;top:0" width="27" height="21.5" viewBox="0 0 27 21.5"><path d="M10.50 4h5.400l4.900 13.600h-15.200z" fill="none" stroke="#c6e9ef" stroke-width="1.300" stroke-linejoin="round"/><path d="M6.60 14.800h13.200l1 2.800h-15.200z" fill="#c6e9ef"/><path d="M11.20 14.500l7.800-11.300" stroke="#c6e9ef" stroke-width="1.300"/><path d="M9.20 14.600a3 2.600 0 0 1 6 0" fill="none" stroke="#c6e9ef" stroke-width="1.100"/></svg></div>
<div class="btn" style="left:730.3px;top:297px;width:25.3px;height:21px;background:#4b5356;box-shadow:0 0 0 1px rgba(50,58,61,.5)"><svg class="a" style="left:0;top:0" width="25" height="21.5" viewBox="0 0 25 21.5"><g fill="#c6e9ef"><ellipse cx="10.300" cy="6.800" rx="2" ry="3.500" transform="rotate(-14 10.300 6.800)"/><ellipse cx="11.900" cy="12.700" rx="1.500" ry="1.400"/><ellipse cx="17.200" cy="10.500" rx="2" ry="3.500" transform="rotate(10 17.200 10.500)"/><ellipse cx="15.700" cy="16.300" rx="1.500" ry="1.400"/></g></svg></div>
<div class="btn" style="left:762px;top:297px;width:25px;height:21px;background:#4b5356;box-shadow:0 0 0 1px rgba(50,58,61,.5)"><svg class="a" style="left:0;top:0" width="25.5" height="21.5" viewBox="0 0 25.5 21.5"><path d="M9.75 4h5.400l4.900 13.600h-15.200z" fill="none" stroke="#c6e9ef" stroke-width="1.300" stroke-linejoin="round"/><path d="M5.85 14.800h13.200l1 2.800h-15.200z" fill="#c6e9ef"/><path d="M10.45 14.500l7.800-11.300" stroke="#c6e9ef" stroke-width="1.300"/><path d="M8.45 14.600a3 2.600 0 0 1 6 0" fill="none" stroke="#c6e9ef" stroke-width="1.100"/></svg></div>
<div class="btn" style="left:792.3px;top:297px;width:25px;height:21px;background:#4b5356;box-shadow:0 0 0 1px rgba(50,58,61,.5)"><svg class="a" style="left:0;top:0" width="25.5" height="21.5" viewBox="0 0 25.5 21.5"><g fill="#c6e9ef"><rect x="2.200" y="8.300" width="20.600" height="5" rx=".4" transform="rotate(45 12.500 10.800)"/><rect x="2.200" y="8.300" width="20.600" height="5" rx=".4" transform="rotate(-45 12.500 10.800)"/></g><rect x="10.200" y="7.500" width="4.600" height="6.600" fill="#a9c9ce"/></svg></div>
<div class="a" style="left:383px;top:330px;width:344.500px;height:266px;background:#1f2629"></div>
<div class="a" style="left:383px;top:355.300px;width:344.500px;height:1.400px;background:#566063"></div>
<div class="rt" style="left:387.7px;top:343.400px">1:1:000</div>
<div class="tick" style="left:532.9px;top:345px;height:11px"></div>
<div class="rt" style="left:537.3px;top:343.400px">5:1:000</div>
<div class="tick" style="left:688.3px;top:345px;height:11px"></div>
<div class="rt" style="left:692.7px;top:343.400px">9:1:000</div>
<svg class="a" style="left:383px;top:330.500px" width="345" height="12"><path d="M0 0h8.500l-8.500 9.500z" fill="#f0b429"/><path d="M317 1.500h16l-8 8.500z" fill="#3eb5f3"/></svg>
<svg class="a" style="left:383px;top:480px" width="345" height="116"><path d="M0 5h272.800v15.300h71.700v95.700h-344.500z" fill="#46916f"/></svg>
<div class="a" style="left:383px;top:596px;width:344.500px;height:13.500px;background:#2a3135"></div>
<div class="a" style="left:384px;top:598.500px;width:314px;height:8.600px;background:#6f7f82;border-radius:2px;border:1px solid #768688"></div>
<div class="a" style="left:386.500px;top:600.500px;width:1.500px;height:5px;background:#1d2427"></div>
<div class="a" style="left:693.500px;top:600.500px;width:1.500px;height:5px;background:#1d2427"></div>
<svg class="a" style="left:700px;top:597px" width="26" height="12"><path d="M3.500 6h5M15.500 6h6M18.500 3v6" stroke="#8e999b" stroke-width="1.300"/></svg>
<div class="a" style="left:727.300px;top:330.200px;width:1.500px;height:279.300px;background:#1a2023"></div>
<div class="a" style="left:728.800px;top:330.200px;width:231.200px;height:279.300px;background:#f5fcfe"></div>
<div class="a" style="left:744px;top:337px;font-size:10px;line-height:12px;color:#2b2f30">Time</div>
<div class="a" style="left:807px;top:337px;font-size:10px;line-height:12px;color:#2b2f30">Tempo</div>
<div class="a" style="left:798.300px;top:336px;width:1.400px;height:13.500px;background:#8a9092"></div>
<div class="a" style="left:858.300px;top:336px;width:1.400px;height:13.500px;background:#8a9092"></div>
<div class="a" style="left:729.500px;top:354px;width:230.500px;height:1px;background:#8e9496"></div>
<div class="a" style="left:738.500px;top:359.500px;width:212px;height:20px;background:#d3dcdc;border-radius:4px"></div>
<div class="a" style="left:745px;top:360.0px;font-size:11.600px;line-height:14px;color:#111;-webkit-text-stroke:.2px #111">1:1:000</div>
<div class="a" style="left:808px;top:360.0px;font-size:11.600px;line-height:14px;color:#111;-webkit-text-stroke:.2px #111">4/4</div>
<div class="a" style="left:745px;top:380.8px;font-size:11.600px;line-height:14px;color:#111;-webkit-text-stroke:.2px #111">1:1:000</div>
<div class="a" style="left:808px;top:380.8px;font-size:11.600px;line-height:14px;color:#111;-webkit-text-stroke:.2px #111">120.00</div>
<div class="a" style="left:745px;top:401.6px;font-size:11.600px;line-height:14px;color:#111;-webkit-text-stroke:.2px #111">8:2:000</div>
<div class="a" style="left:808px;top:401.6px;font-size:11.600px;line-height:14px;color:#111;-webkit-text-stroke:.2px #111">104.00</div>
<div class="a" style="left:490.500px;top:167px;width:268.800px;height:108px;background:#f3fafb;border:1px solid #10181a;border-radius:10px;box-shadow:0 3px 10px rgba(0,0,0,.35)"></div>
<div class="a" style="left:491.500px;top:192.800px;width:266px;height:1.500px;background:#454b4d"></div>
<div class="a" style="left:498.700px;top:175.300px;width:10.500px;height:10.500px;border-radius:50%;background:#ff0d0d"></div>
<div class="a" style="left:515.800px;top:175.300px;width:10.500px;height:10.500px;border-radius:50%;background:#b87410"></div>
<div class="a" style="left:533px;top:175.300px;width:10.500px;height:10.500px;border-radius:50%;background:#d6dcdc;border:1px solid #c0c7c7"></div>
<div class="a" style="left:524.600px;top:173px;width:200px;text-align:center;font-weight:bold;font-size:11.900px;line-height:14px;color:#1b1f20">Tempo properties</div>
<div class="a" style="left:500.500px;top:204px;width:189px;height:66px;background:#eff7f8;border:1px solid #8e9698;border-radius:4px"></div>
<div class="a" style="left:504px;top:211.500px;width:46.300px;text-align:right;font-size:9.300px;line-height:11px;color:#1b1f20;-webkit-text-stroke:.2px #1b1f20">Position:</div>
<div class="a" style="left:553.800px;top:210px;width:71.200px;height:15.500px;background:#f7fdfe;border:1.300px solid #4e5456;font-size:9.500px;line-height:13px;padding-left:2.500px;color:#1b1f20">8:3:000</div>
<div class="a" style="left:503.500px;top:243.500px;width:43px;text-align:right;font-size:9.300px;line-height:11px;color:#1b1f20;-webkit-text-stroke:.2px #1b1f20">Bpm:</div>
<div class="a" style="left:551.800px;top:237.800px;width:64.400px;height:21.400px;background:#5b6fe0;border-radius:3px"></div>
<div class="a" style="left:554px;top:240px;width:60px;height:17px;background:#f7fdfe;border:1.300px solid #20262a;font-size:9.500px;line-height:14px;padding-left:2px;color:#1b1f20">96<span style="display:inline-block;width:1px;height:10px;background:#000;vertical-align:-1.500px"></span></div>
<svg class="a" style="left:619px;top:242px" width="10" height="16"><path d="M5 1.500l3.500 5h-7zM5 14.500l3.500-5h-7z" fill="#111"/><rect x="2.300" y="6.800" width="5.400" height="2.400" fill="#9aa2a2"/></svg>
<div class="a" style="left:638px;top:242px;width:44.5px;height:15.3px;background:#f3fafb;border:1.400px solid #757c7e;border-radius:5px;text-align:center;font-size:9.300px;line-height:12.9px;color:#1b1f20;-webkit-text-stroke:.2px #1b1f20">Tap</div>
<div class="a" style="left:700.5px;top:201px;width:52.5px;height:15.3px;background:#f3fafb;border:1.400px solid #757c7e;border-radius:5px;text-align:center;font-size:9.300px;line-height:12.9px;color:#1b1f20;-webkit-text-stroke:.2px #1b1f20">OK</div>
<div class="a" style="left:700.5px;top:224.5px;width:52.5px;height:15.3px;background:#f3fafb;border:1.400px solid #757c7e;border-radius:5px;text-align:center;font-size:9.300px;line-height:12.9px;color:#1b1f20;-webkit-text-stroke:.2px #1b1f20">Cancel</div>
<div class="a" style="left:700.5px;top:254.5px;width:53px;height:15.3px;background:#f3fafb;border:1.400px solid #757c7e;border-radius:5px;text-align:center;font-size:9.300px;line-height:12.9px;color:#1b1f20;-webkit-text-stroke:.2px #1b1f20">Help</div>
</body></html>
